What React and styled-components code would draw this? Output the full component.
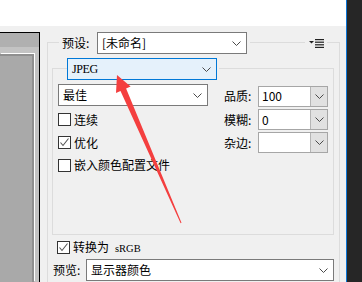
import styled, { createGlobalStyle } from "styled-components";

const GlobalStyle = createGlobalStyle`
  html, body {
    margin: 0;
    padding: 0;
  }
  body {
    width: 362px;
    height: 282px;
    overflow: hidden;
    font-family: "Noto Sans CJK SC", "Noto Sans", sans-serif;
    font-size: 12px;
    color: #000;
  }
  * {
    box-sizing: border-box;
  }
`;

const Root = styled.div`
  position: relative;
  display: flex;
  width: 362px;
  height: 282px;
`;

const Main = styled.div`
  width: 346px;
  display: flex;
  flex-direction: column;
`;

const TopBar = styled.div`
  height: 26px;
  background: #fff;
`;

const Content = styled.div`
  flex: 1;
  display: flex;
  background: #f0f0f0;
`;

const BlueLine = styled.div`
  width: 1px;
  background: #0a74d6;
`;

const DarkSide = styled.div`
  width: 15px;
  background: #262626;
`;

/* left image preview */
const ImageColumn = styled.div`
  width: 40px;
  padding-top: 6px;
  display: flex;
  flex-direction: column;
`;

const ImageFrame = styled.div`
  flex: 1;
  display: flex;
  flex-direction: column;
  border-top: 1px solid #000;
  border-right: 1px solid #000;
  background: #c3c3c3;
`;

const Stripe = styled.div`
  height: 14px;
  background: #b0b0b0;
`;

const CanvasArea = styled.div`
  flex: 1;
  padding: 7px 5px 0 0;
`;

const Canvas = styled.div`
  height: 100%;
  background: #a9a9a9;
  border-top: 2px solid #8f8f8f;
  border-right: 2px solid #8f8f8f;
  box-shadow: 1px -1px 0 #fff;
`;

/* right settings panel */
const Panel = styled.div`
  flex: 1;
  display: flex;
  flex-direction: column;
  padding: 6px 6px 0 7px;
`;

const GroupHeader = styled.div`
  display: flex;
  height: 22px;
  flex-shrink: 0;
`;

const Seg = styled.div`
  width: ${(p) => (p.$w ? `${p.$w}px` : "auto")};
  flex: ${(p) => (p.$w ? "none" : 1)};
  margin-top: 10px;
  margin-left: ${(p) => p.$ml || 0}px;
  margin-right: ${(p) => p.$mr || 0}px;
  border-top: 1px solid #dcdcdc;
  border-left: ${(p) => (p.$edge === "left" ? "1px solid #dcdcdc" : "none")};
  border-right: ${(p) => (p.$edge === "right" ? "1px solid #dcdcdc" : "none")};
`;

const Label = styled.div`
  width: ${(p) => p.$w}px;
  padding-left: ${(p) => p.$pl || 0}px;
  display: flex;
  align-items: center;
  white-space: nowrap;
  line-height: 1;
`;

const OuterBody = styled.div`
  flex: 1;
  display: flex;
  flex-direction: column;
  border-left: 1px solid #dcdcdc;
  border-right: 1px solid #dcdcdc;
  padding: 4px 5px 0 4px;
`;

const InnerBody = styled.div`
  height: 155px;
  border: 1px solid #dcdcdc;
  border-top: none;
  padding: 4px 0 0 5px;
  display: grid;
  grid-template-columns: 166px 34px 70px;
  grid-template-rows: 24px 23px 23px 22px;
  align-content: start;
`;

const Select = styled.div`
  width: ${(p) => (p.$w ? `${p.$w}px` : "auto")};
  flex: ${(p) => (p.$w ? "none" : 1)};
  height: 22px;
  align-self: start;
  display: flex;
  align-items: center;
  justify-content: space-between;
  padding: 0 5px 0 4px;
  border: 1px solid ${(p) => (p.$active ? "#0078d7" : "#7a7a7a")};
  background: ${(p) => (p.$active ? "#e5f1fb" : "#fff")};
  line-height: 1;
  white-space: nowrap;
`;

const SerifText = styled.span`
  font-family: "Liberation Serif", serif;
  font-size: ${(p) => p.$size || 12}px;
  letter-spacing: ${(p) => p.$ls || 0}px;
  margin-left: ${(p) => p.$ml || 0}px;
`;

const Cell = styled.div`
  display: flex;
  align-items: center;
  line-height: 1;
  white-space: nowrap;
`;

const Combo = styled.div`
  width: 70px;
  height: 21px;
  display: flex;
  border: 1px solid #a6a6a6;
`;

const ComboInput = styled.div`
  flex: 1;
  background: #fff;
  padding-left: 3px;
  display: flex;
  align-items: center;
  line-height: 1;
`;

const ComboButton = styled.div`
  width: 17px;
  background: #e1e1e1;
  border-left: 1px solid #b5b5b5;
  display: flex;
  align-items: center;
  justify-content: center;
`;

const CheckRow = styled.div`
  display: flex;
  align-items: center;
  gap: 3px;
  line-height: 1;
  white-space: nowrap;
  margin-left: ${(p) => p.$ml || 0}px;
  margin-top: ${(p) => p.$mt || 0}px;
  height: ${(p) => (p.$h ? `${p.$h}px` : "auto")};
`;

const Box = styled.span`
  width: 13px;
  height: 13px;
  border: 1px solid #333;
  background: #fff;
  display: flex;
  align-items: center;
  justify-content: center;
  flex-shrink: 0;
`;

const PreviewRow = styled.div`
  display: flex;
  height: 22px;
  margin-top: 5px;
  margin-left: 1px;
`;

const Overlay = styled.svg`
  position: absolute;
  left: 0;
  top: 0;
  pointer-events: none;
`;

const Chevron = () => (
  <svg width="9" height="5" viewBox="0 0 9 5">
    <path d="M0.5 0.5 L4.5 4.5 L8.5 0.5" stroke="#4a4a4a" strokeWidth="1" fill="none" />
  </svg>
);

const Check = ({ checked, children }) => (
  <>
    <Box>
      {checked && (
        <svg width="11" height="11" viewBox="0 0 11 11">
          <path d="M1.5 5.5 L4 8.5 L9.5 1.5" stroke="#555" strokeWidth="1.1" fill="none" />
        </svg>
      )}
    </Box>
    {children}
  </>
);

const MenuIcon = () => (
  <svg width="15" height="22" viewBox="0 0 15 22">
    <path d="M0 9 L5 9 L2.5 11.5 Z" fill="#222" />
    <rect x="6" y="7" width="9" height="1.2" fill="#222" />
    <rect x="6" y="9.6" width="9" height="1.2" fill="#222" />
    <rect x="6" y="12.2" width="9" height="1.2" fill="#222" />
    <rect x="6" y="14.8" width="9" height="1.2" fill="#222" />
  </svg>
);

const ComboField = ({ value }) => (
  <Combo>
    <ComboInput>{value}</ComboInput>
    <ComboButton>
      <Chevron />
    </ComboButton>
  </Combo>
);

export default function App() {
  return (
    <Root>
      <GlobalStyle />
      <Main>
        <TopBar />
        <Content>
          <ImageColumn>
            <ImageFrame>
              <Stripe />
              <CanvasArea>
                <Canvas />
              </CanvasArea>
            </ImageFrame>
          </ImageColumn>

          <Panel>
            <GroupHeader>
              <Seg $w={12} $edge="left" />
              <Label $w={38} $pl={3}>预设:</Label>
              <Select $w={150}>
                <span>[未命名]</span>
                <Chevron />
              </Select>
              <Seg $ml={3} $mr={4} />
              <MenuIcon />
              <Seg $w={13} $ml={3} $edge="right" />
            </GroupHeader>

            <OuterBody>
              <GroupHeader>
                <Seg $w={15} $edge="left" />
                <Select $w={150} $active>
                  <SerifText $ls={-0.4}>JPEG</SerifText>
                  <Chevron />
                </Select>
                <Seg $ml={2} $edge="right" />
              </GroupHeader>

              <InnerBody>
                <Select $w={150}>
                  <span>最佳</span>
                  <Chevron />
                </Select>
                <Cell>品质:</Cell>
                <Cell>
                  <ComboField value="100" />
                </Cell>

                <CheckRow>
                  <Check>连续</Check>
                </CheckRow>
                <Cell>模糊:</Cell>
                <Cell>
                  <ComboField value="0" />
                </Cell>

                <CheckRow>
                  <Check checked>优化</Check>
                </CheckRow>
                <Cell>杂边:</Cell>
                <Cell>
                  <ComboField value="" />
                </Cell>

                <CheckRow>
                  <Check>嵌入颜色配置文件</Check>
                </CheckRow>
              </InnerBody>

              <CheckRow $ml={5} $mt={6} $h={13}>
                <Check checked>
                  <span>
                    转换为<SerifText $size={10.5} $ml={6}>sRGB</SerifText>
                  </span>
                </Check>
              </CheckRow>

              <PreviewRow>
                <Label $w={33}>预览:</Label>
                <Select>
                  <span>显示器颜色</span>
                  <Chevron />
                </Select>
              </PreviewRow>
            </OuterBody>
          </Panel>
        </Content>
      </Main>
      <BlueLine />
      <DarkSide />

      <Overlay width="362" height="282" viewBox="0 0 362 282">
        <polygon
          points="117,75 130.6,86.5 126.1,88.5 181.5,222.8 180.6,223.2 120.5,90.9 116,92.9"
          fill="#f43f3f"
        />
      </Overlay>
    </Root>
  );
}
